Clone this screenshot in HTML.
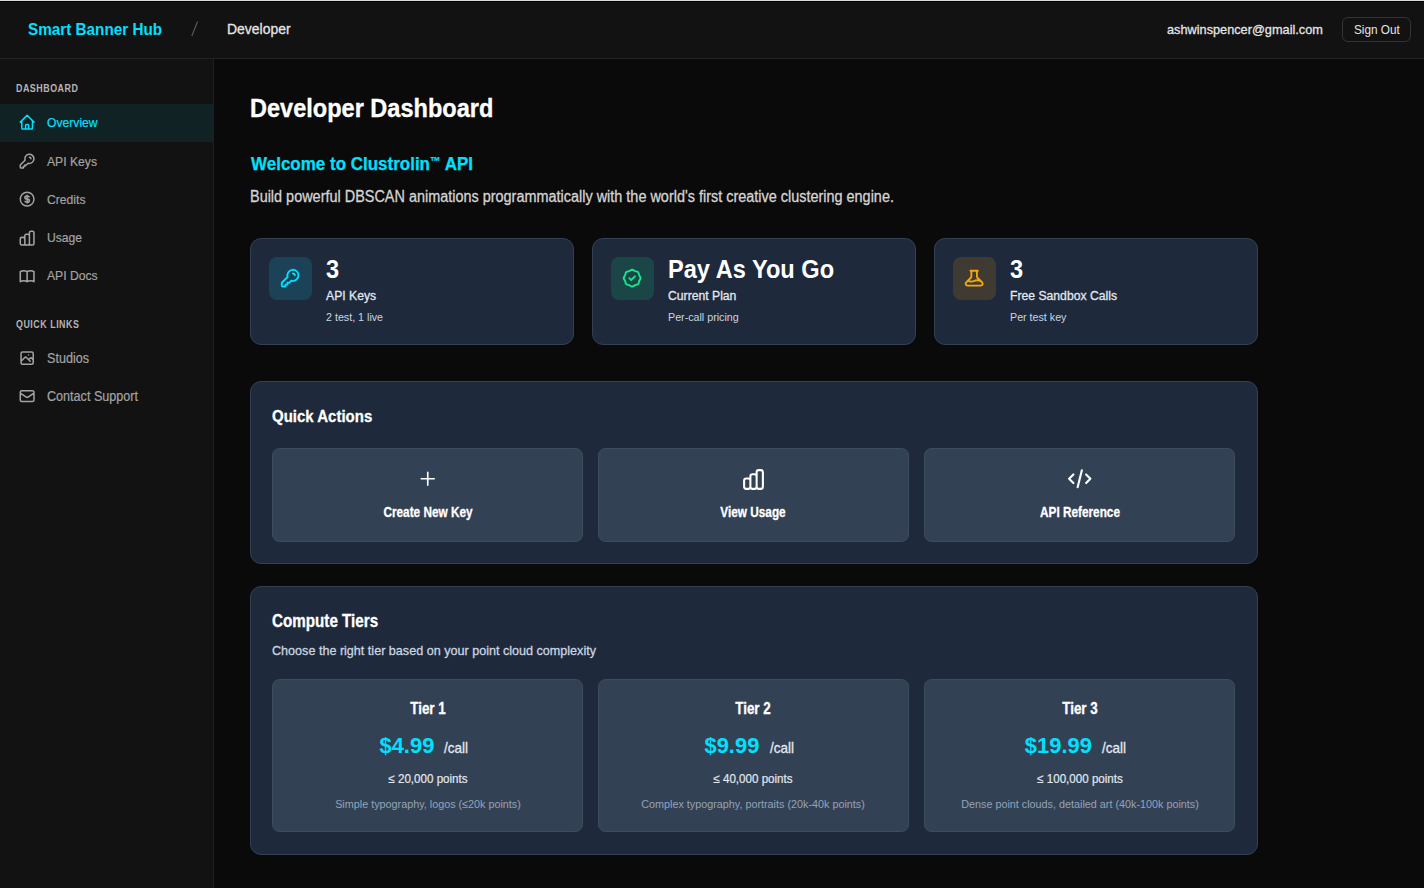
<!DOCTYPE html>
<html><head><meta charset="utf-8">
<style>
*{box-sizing:border-box;margin:0;padding:0}
html,body{width:1424px;height:888px;overflow:hidden;background:#0a0a0a;font-family:"Liberation Sans",sans-serif;}
.a{position:absolute}
.t{position:absolute;white-space:nowrap;line-height:1}
.sec{font-weight:700;color:#b5b5b5}
.nav{color:#a3a3a3;-webkit-text-stroke:0.2px #a3a3a3}
.nav.on{color:#00e0ff;-webkit-text-stroke:0.2px #00e0ff}
.ico{position:absolute;fill:none;stroke-linecap:round;stroke-linejoin:round}
.card{position:absolute;background:#1e293b;border:1px solid #334155;border-radius:11px}
.tile{position:absolute;background:#334155;border:1px solid #3e4c60;border-radius:7.5px}
.med{-webkit-text-stroke:0.3px currentColor}
</style></head><body>
<div class="a" style="left:0;top:0;width:1424px;height:1px;background:#d9dbd7"></div>
<div class="a" style="left:0;top:1px;width:1424px;height:1px;background:#000"></div>
<div class="a" style="left:0;top:2px;width:1424px;height:56px;background:#121212"></div>
<div class="a" style="left:0;top:58px;width:1424px;height:1px;background:#232323"></div>
<div class="a" style="left:0;top:59px;width:213px;height:829px;background:#121212"></div>
<div class="a" style="left:213px;top:59px;width:1px;height:829px;background:#1f1f1f"></div>
<div class="a" style="left:0;top:104px;width:213px;height:37.5px;background:#112225"></div>
<svg class="a" style="left:185px;top:15px" width="20" height="28"><line x1="6.8" y1="21" x2="12.6" y2="6.5" stroke="#5c5c5c" stroke-width="1.1"/></svg>
<div class="a" style="left:1342px;top:17px;width:69px;height:25px;border:1px solid #333;border-radius:6px"></div>
<div class="t" style="left:28px;top:22px;font-size:16.646px;transform:scaleX(0.9191);transform-origin:0 0;font-weight:700;color:#00e0ff">Smart Banner Hub</div>
<div class="t med" style="left:227px;top:21px;font-size:15.087px;transform:scaleX(0.9250);transform-origin:0 0;color:#e5e5e5">Developer</div>
<div class="t med" style="left:1166.5px;top:23px;font-size:13.643px;transform:scaleX(0.9346);transform-origin:0 0;color:#e5e5e5">ashwinspencer@gmail.com</div>
<div class="t" style="left:1353.5px;top:24px;font-size:12.626px;transform:scaleX(0.9346);transform-origin:0 0;color:#e5e5e5">Sign Out</div>
<div class="t sec" style="left:16px;top:84px;font-size:10.34px;transform:scaleX(0.8600);transform-origin:0 0;letter-spacing:0.6px">DASHBOARD</div>
<svg class="ico" style="left:18.38px;top:113.23px" width="18.25" height="18.25" viewBox="0 0 24 24" stroke="#00e0ff" stroke-width="2"><path d="M3 12l2-2m0 0l7-7 7 7M5 10v10a1 1 0 001 1h3m10-11l2 2m-2-2v10a1 1 0 01-1 1h-3m-6 0a1 1 0 001-1v-4a1 1 0 011-1h2a1 1 0 011 1v4a1 1 0 001 1m-6 0h6"/></svg>
<div class="t nav on" style="left:47px;top:116px;font-size:13.365px;transform:scaleX(0.9091);transform-origin:0 0;">Overview</div>
<svg class="ico" style="left:18.38px;top:151.72px" width="18.25" height="18.25" viewBox="0 0 24 24" stroke="#a3a3a3" stroke-width="2"><path d="M15 7a2 2 0 012 2m4 0a6 6 0 01-7.743 5.743L11 17H9v2H7v2H4a1 1 0 01-1-1v-2.586a1 1 0 01.293-.707l5.964-5.964A6 6 0 1121 9z"/></svg>
<div class="t nav" style="left:47px;top:155px;font-size:13.365px;transform:scaleX(0.9091);transform-origin:0 0;">API Keys</div>
<svg class="ico" style="left:18.38px;top:190.03px" width="18.25" height="18.25" viewBox="0 0 24 24" stroke="#a3a3a3" stroke-width="2"><path d="M12 8c-1.657 0-3 .895-3 2s1.343 2 3 2 3 .895 3 2-1.343 2-3 2m0-8c1.11 0 2.08.402 2.599 1M12 8V7m0 1v8m0 0v1m0-1c-1.11 0-2.08-.402-2.599-1M21 12a9 9 0 11-18 0 9 9 0 0118 0z"/></svg>
<div class="t nav" style="left:47px;top:193px;font-size:13.365px;transform:scaleX(0.9091);transform-origin:0 0;">Credits</div>
<svg class="ico" style="left:18.38px;top:228.53px" width="18.25" height="18.25" viewBox="0 0 24 24" stroke="#a3a3a3" stroke-width="2"><path d="M9 19v-6a2 2 0 00-2-2H5a2 2 0 00-2 2v6a2 2 0 002 2h2a2 2 0 002-2zm0 0V9a2 2 0 012-2h2a2 2 0 012 2v10m-6 0a2 2 0 002 2h2a2 2 0 002-2m0 0V5a2 2 0 012-2h2a2 2 0 012 2v14a2 2 0 01-2 2h-2a2 2 0 01-2-2z"/></svg>
<div class="t nav" style="left:47px;top:231px;font-size:13.365px;transform:scaleX(0.9091);transform-origin:0 0;">Usage</div>
<svg class="ico" style="left:18.38px;top:266.52px" width="18.25" height="18.25" viewBox="0 0 24 24" stroke="#a3a3a3" stroke-width="2"><path d="M12 6.253v13m0-13C10.832 5.477 9.246 5 7.5 5S4.168 5.477 3 6.253v13C4.168 18.477 5.754 18 7.5 18s3.332.477 4.5 1.253m0-13C13.168 5.477 14.754 5 16.5 5c1.747 0 3.332.477 4.5 1.253v13C19.832 18.477 18.247 18 16.5 18c-1.746 0-3.332.477-4.5 1.253"/></svg>
<div class="t nav" style="left:47px;top:269px;font-size:13.365px;transform:scaleX(0.9091);transform-origin:0 0;">API Docs</div>
<div class="t sec" style="left:16px;top:320px;font-size:10.34px;transform:scaleX(0.8600);transform-origin:0 0;letter-spacing:0.6px">QUICK LINKS</div>
<svg class="ico" style="left:18.38px;top:349.02px" width="18.25" height="18.25" viewBox="0 0 24 24" stroke="#a3a3a3" stroke-width="2"><path d="M4 16l4.586-4.586a2 2 0 012.828 0L16 16m-2-2l1.586-1.586a2 2 0 012.828 0L20 14m-6-6h.01M6 20h12a2 2 0 002-2V6a2 2 0 00-2-2H6a2 2 0 00-2 2v12a2 2 0 002 2z"/></svg>
<div class="t nav" style="left:47px;top:352px;font-size:13.86px;transform:scaleX(0.9091);transform-origin:0 0;">Studios</div>
<svg class="ico" style="left:18.38px;top:387.27px" width="18.25" height="18.25" viewBox="0 0 24 24" stroke="#a3a3a3" stroke-width="2"><path d="M3 8l7.89 5.26a2 2 0 002.22 0L21 8M5 19h14a2 2 0 002-2V7a2 2 0 00-2-2H5a2 2 0 00-2 2v10a2 2 0 002 2z"/></svg>
<div class="t nav" style="left:47px;top:390px;font-size:13.86px;transform:scaleX(0.9091);transform-origin:0 0;">Contact Support</div>
<div class="t" style="left:250px;top:96px;font-size:25.811px;transform:scaleX(0.9124);transform-origin:0 0;font-weight:700;color:#fff;-webkit-text-stroke:0.35px #fff">Developer Dashboard</div>
<div class="t" style="left:250.5px;top:155px;font-size:18.645px;transform:scaleX(0.9120);transform-origin:0 0;font-weight:700;color:#00e0ff;-webkit-text-stroke:0.25px #00e0ff">Welcome to Clustrolin<span style='font-size:0.62em;position:relative;top:-0.42em'>™</span> API</div>
<div class="t med" style="left:249.5px;top:189px;font-size:15.606px;transform:scaleX(0.9259);transform-origin:0 0;color:#d4d4d4">Build powerful DBSCAN animations programmatically with the world's first creative clustering engine.</div>
<div class="card" style="left:250px;top:237.5px;width:324px;height:107px"></div>
<div class="a" style="left:269px;top:257px;width:43px;height:43px;border-radius:8px;background:#1b4257"></div>
<svg class="ico" style="left:279.35px;top:266.85px" width="22.3" height="22.3" viewBox="0 0 24 24" stroke="#00e0ff" stroke-width="2"><path d="M15 7a2 2 0 012 2m4 0a6 6 0 01-7.743 5.743L11 17H9v2H7v2H4a1 1 0 01-1-1v-2.586a1 1 0 01.293-.707l5.964-5.964A6 6 0 1121 9z"/></svg>
<div class="t" style="left:326.2px;top:257px;font-size:25.724px;transform:scaleX(0.9174);transform-origin:0 0;font-weight:700;color:#fff">3</div>
<div class="t med" style="left:326px;top:289px;font-size:13.298px;transform:scaleX(0.9174);transform-origin:0 0;color:#e2e8f0">API Keys</div>
<div class="t" style="left:326px;top:312px;font-size:11.556px;transform:scaleX(0.9259);transform-origin:0 0;color:#cbd5e1">2 test, 1 live</div>
<div class="card" style="left:592px;top:237.5px;width:324px;height:107px"></div>
<div class="a" style="left:611px;top:257px;width:43px;height:43px;border-radius:8px;background:#1b4647"></div>
<svg class="ico" style="left:621.35px;top:266.85px" width="22.3" height="22.3" viewBox="0 0 24 24" stroke="#19e68c" stroke-width="2"><path d="M9 12l2 2 4-4M7.835 4.697a3.42 3.42 0 001.946-.806 3.42 3.42 0 014.438 0 3.42 3.42 0 001.946.806 3.42 3.42 0 013.138 3.138 3.42 3.42 0 00.806 1.946 3.42 3.42 0 010 4.438 3.42 3.42 0 00-.806 1.946 3.42 3.42 0 01-3.138 3.138 3.42 3.42 0 00-1.946.806 3.42 3.42 0 01-4.438 0 3.42 3.42 0 00-1.946-.806 3.42 3.42 0 01-3.138-3.138 3.42 3.42 0 00-.806-1.946 3.42 3.42 0 010-4.438 3.42 3.42 0 00.806-1.946 3.42 3.42 0 013.138-3.138z"/></svg>
<div class="t" style="left:668.2px;top:257px;font-size:25.724px;transform:scaleX(0.9174);transform-origin:0 0;font-weight:700;color:#fff">Pay As You Go</div>
<div class="t med" style="left:668px;top:289px;font-size:13.298px;transform:scaleX(0.9174);transform-origin:0 0;color:#e2e8f0">Current Plan</div>
<div class="t" style="left:668px;top:312px;font-size:11.556px;transform:scaleX(0.9259);transform-origin:0 0;color:#cbd5e1">Per-call pricing</div>
<div class="card" style="left:934px;top:237.5px;width:324px;height:107px"></div>
<div class="a" style="left:953px;top:257px;width:43px;height:43px;border-radius:8px;background:#3f3b33"></div>
<svg class="ico" style="left:963.35px;top:266.85px" width="22.3" height="22.3" viewBox="0 0 24 24" stroke="#f5a70b" stroke-width="2"><path d="M19.428 15.428a2 2 0 00-1.022-.547l-2.387-.477a6 6 0 00-3.86.517l-.318.158a6 6 0 01-3.86.517L6.05 15.21a2 2 0 00-1.806.547M8 4h8l-1 1v5.172a2 2 0 00.586 1.414l5 5c1.26 1.26.367 3.414-1.415 3.414H4.828c-1.782 0-2.674-2.154-1.414-3.414l5-5A2 2 0 009 10.172V5L8 4z"/></svg>
<div class="t" style="left:1010.2px;top:257px;font-size:25.724px;transform:scaleX(0.9174);transform-origin:0 0;font-weight:700;color:#fff">3</div>
<div class="t med" style="left:1010px;top:289px;font-size:13.298px;transform:scaleX(0.9174);transform-origin:0 0;color:#e2e8f0">Free Sandbox Calls</div>
<div class="t" style="left:1010px;top:312px;font-size:11.556px;transform:scaleX(0.9259);transform-origin:0 0;color:#cbd5e1">Per test key</div>
<div class="card" style="left:250px;top:380.7px;width:1008px;height:183px"></div>
<div class="t" style="left:272px;top:408px;font-size:17.025px;transform:scaleX(0.8811);transform-origin:0 0;font-weight:700;color:#fff;-webkit-text-stroke:0.3px #fff">Quick Actions</div>
<div class="tile" style="left:272px;top:447.5px;width:311.3px;height:94px"></div>
<svg class="ico" style="left:417.90px;top:469.25px" width="19.5" height="19.5" viewBox="0 0 24 24" stroke="#fff" stroke-width="2"><path d="M12 4v16m8-8H4"/></svg>
<div class="t" style="left:127.64999999999998px;width:600px;text-align:center;top:505px;font-size:14.16px;transform:scaleX(0.8333);transform-origin:50% 0;font-weight:700;color:#fff;-webkit-text-stroke:0.3px #fff">Create New Key</div>
<div class="tile" style="left:597.8px;top:447.5px;width:311.3px;height:94px"></div>
<svg class="ico" style="left:740.95px;top:466.50px" width="25" height="25" viewBox="0 0 24 24" stroke="#fff" stroke-width="2"><path d="M9 19v-6a2 2 0 00-2-2H5a2 2 0 00-2 2v6a2 2 0 002 2h2a2 2 0 002-2zm0 0V9a2 2 0 012-2h2a2 2 0 012 2v10m-6 0a2 2 0 002 2h2a2 2 0 002-2m0 0V5a2 2 0 012-2h2a2 2 0 012 2v14a2 2 0 01-2 2h-2a2 2 0 01-2-2z"/></svg>
<div class="t" style="left:453.44999999999993px;width:600px;text-align:center;top:505px;font-size:14.16px;transform:scaleX(0.8333);transform-origin:50% 0;font-weight:700;color:#fff;-webkit-text-stroke:0.3px #fff">View Usage</div>
<div class="tile" style="left:923.9px;top:447.5px;width:311.3px;height:94px"></div>
<svg class="ico" style="left:1066.80px;top:466.25px" width="25.5" height="25.5" viewBox="0 0 24 24" stroke="#fff" stroke-width="2"><path d="M10 20l4-16m4 4l4 4-4 4M6 16l-4-4 4-4"/></svg>
<div class="t" style="left:779.55px;width:600px;text-align:center;top:505px;font-size:14.16px;transform:scaleX(0.8333);transform-origin:50% 0;font-weight:700;color:#fff;-webkit-text-stroke:0.3px #fff">API Reference</div>
<div class="card" style="left:250px;top:585.5px;width:1008px;height:269px"></div>
<div class="t" style="left:272px;top:613px;font-size:17.556px;transform:scaleX(0.8658);transform-origin:0 0;font-weight:700;color:#fff;-webkit-text-stroke:0.3px #fff">Compute Tiers</div>
<div class="t med" style="left:272px;top:644px;font-size:13.482px;transform:scaleX(0.9346);transform-origin:0 0;color:#cbd5e1">Choose the right tier based on your point cloud complexity</div>
<div class="tile" style="left:272px;top:678.8px;width:311.3px;height:153px"></div>
<div class="t" style="left:127.64999999999998px;width:600px;text-align:center;top:700px;font-size:16.08px;transform:scaleX(0.8333);transform-origin:50% 0;font-weight:700;color:#fff;-webkit-text-stroke:0.3px #fff">Tier 1</div>
<div class="t" style="left:127.64999999999998px;width:600px;top:735px;display:flex;justify-content:center;align-items:baseline;padding-right:8px"><span style="font-size:22.5px;font-weight:700;color:#00e0ff;display:inline-block;transform:scaleX(0.973);transform-origin:100% 0">$4.99</span><span class="med" style="font-size:14.5px;color:#e2e8f0;margin-left:10px;display:inline-block;transform:scaleX(0.93);transform-origin:0 0">/call</span></div>
<div class="t" style="left:127.64999999999998px;width:600px;text-align:center;top:773px;font-size:12.528px;transform:scaleX(0.9259);transform-origin:50% 0;color:#e2e8f0;-webkit-text-stroke:0.2px #e2e8f0">≤ 20,000 points</div>
<div class="t" style="left:127.64999999999998px;width:600px;text-align:center;top:798px;font-size:11.664px;transform:scaleX(0.9259);transform-origin:50% 0;color:#94a3b8">Simple typography, logos (≤20k points)</div>
<div class="tile" style="left:597.8px;top:678.8px;width:311.3px;height:153px"></div>
<div class="t" style="left:453.44999999999993px;width:600px;text-align:center;top:700px;font-size:16.08px;transform:scaleX(0.8333);transform-origin:50% 0;font-weight:700;color:#fff;-webkit-text-stroke:0.3px #fff">Tier 2</div>
<div class="t" style="left:453.44999999999993px;width:600px;top:735px;display:flex;justify-content:center;align-items:baseline;padding-right:8px"><span style="font-size:22.5px;font-weight:700;color:#00e0ff;display:inline-block;transform:scaleX(0.973);transform-origin:100% 0">$9.99</span><span class="med" style="font-size:14.5px;color:#e2e8f0;margin-left:10px;display:inline-block;transform:scaleX(0.93);transform-origin:0 0">/call</span></div>
<div class="t" style="left:453.44999999999993px;width:600px;text-align:center;top:773px;font-size:12.528px;transform:scaleX(0.9259);transform-origin:50% 0;color:#e2e8f0;-webkit-text-stroke:0.2px #e2e8f0">≤ 40,000 points</div>
<div class="t" style="left:453.44999999999993px;width:600px;text-align:center;top:798px;font-size:11.664px;transform:scaleX(0.9259);transform-origin:50% 0;color:#94a3b8">Complex typography, portraits (20k-40k points)</div>
<div class="tile" style="left:923.9px;top:678.8px;width:311.3px;height:153px"></div>
<div class="t" style="left:779.55px;width:600px;text-align:center;top:700px;font-size:16.08px;transform:scaleX(0.8333);transform-origin:50% 0;font-weight:700;color:#fff;-webkit-text-stroke:0.3px #fff">Tier 3</div>
<div class="t" style="left:779.55px;width:600px;top:735px;display:flex;justify-content:center;align-items:baseline;padding-right:8px"><span style="font-size:22.5px;font-weight:700;color:#00e0ff;display:inline-block;transform:scaleX(0.973);transform-origin:100% 0">$19.99</span><span class="med" style="font-size:14.5px;color:#e2e8f0;margin-left:10px;display:inline-block;transform:scaleX(0.93);transform-origin:0 0">/call</span></div>
<div class="t" style="left:779.55px;width:600px;text-align:center;top:773px;font-size:12.528px;transform:scaleX(0.9259);transform-origin:50% 0;color:#e2e8f0;-webkit-text-stroke:0.2px #e2e8f0">≤ 100,000 points</div>
<div class="t" style="left:779.55px;width:600px;text-align:center;top:798px;font-size:11.664px;transform:scaleX(0.9259);transform-origin:50% 0;color:#94a3b8">Dense point clouds, detailed art (40k-100k points)</div>
</body></html>
